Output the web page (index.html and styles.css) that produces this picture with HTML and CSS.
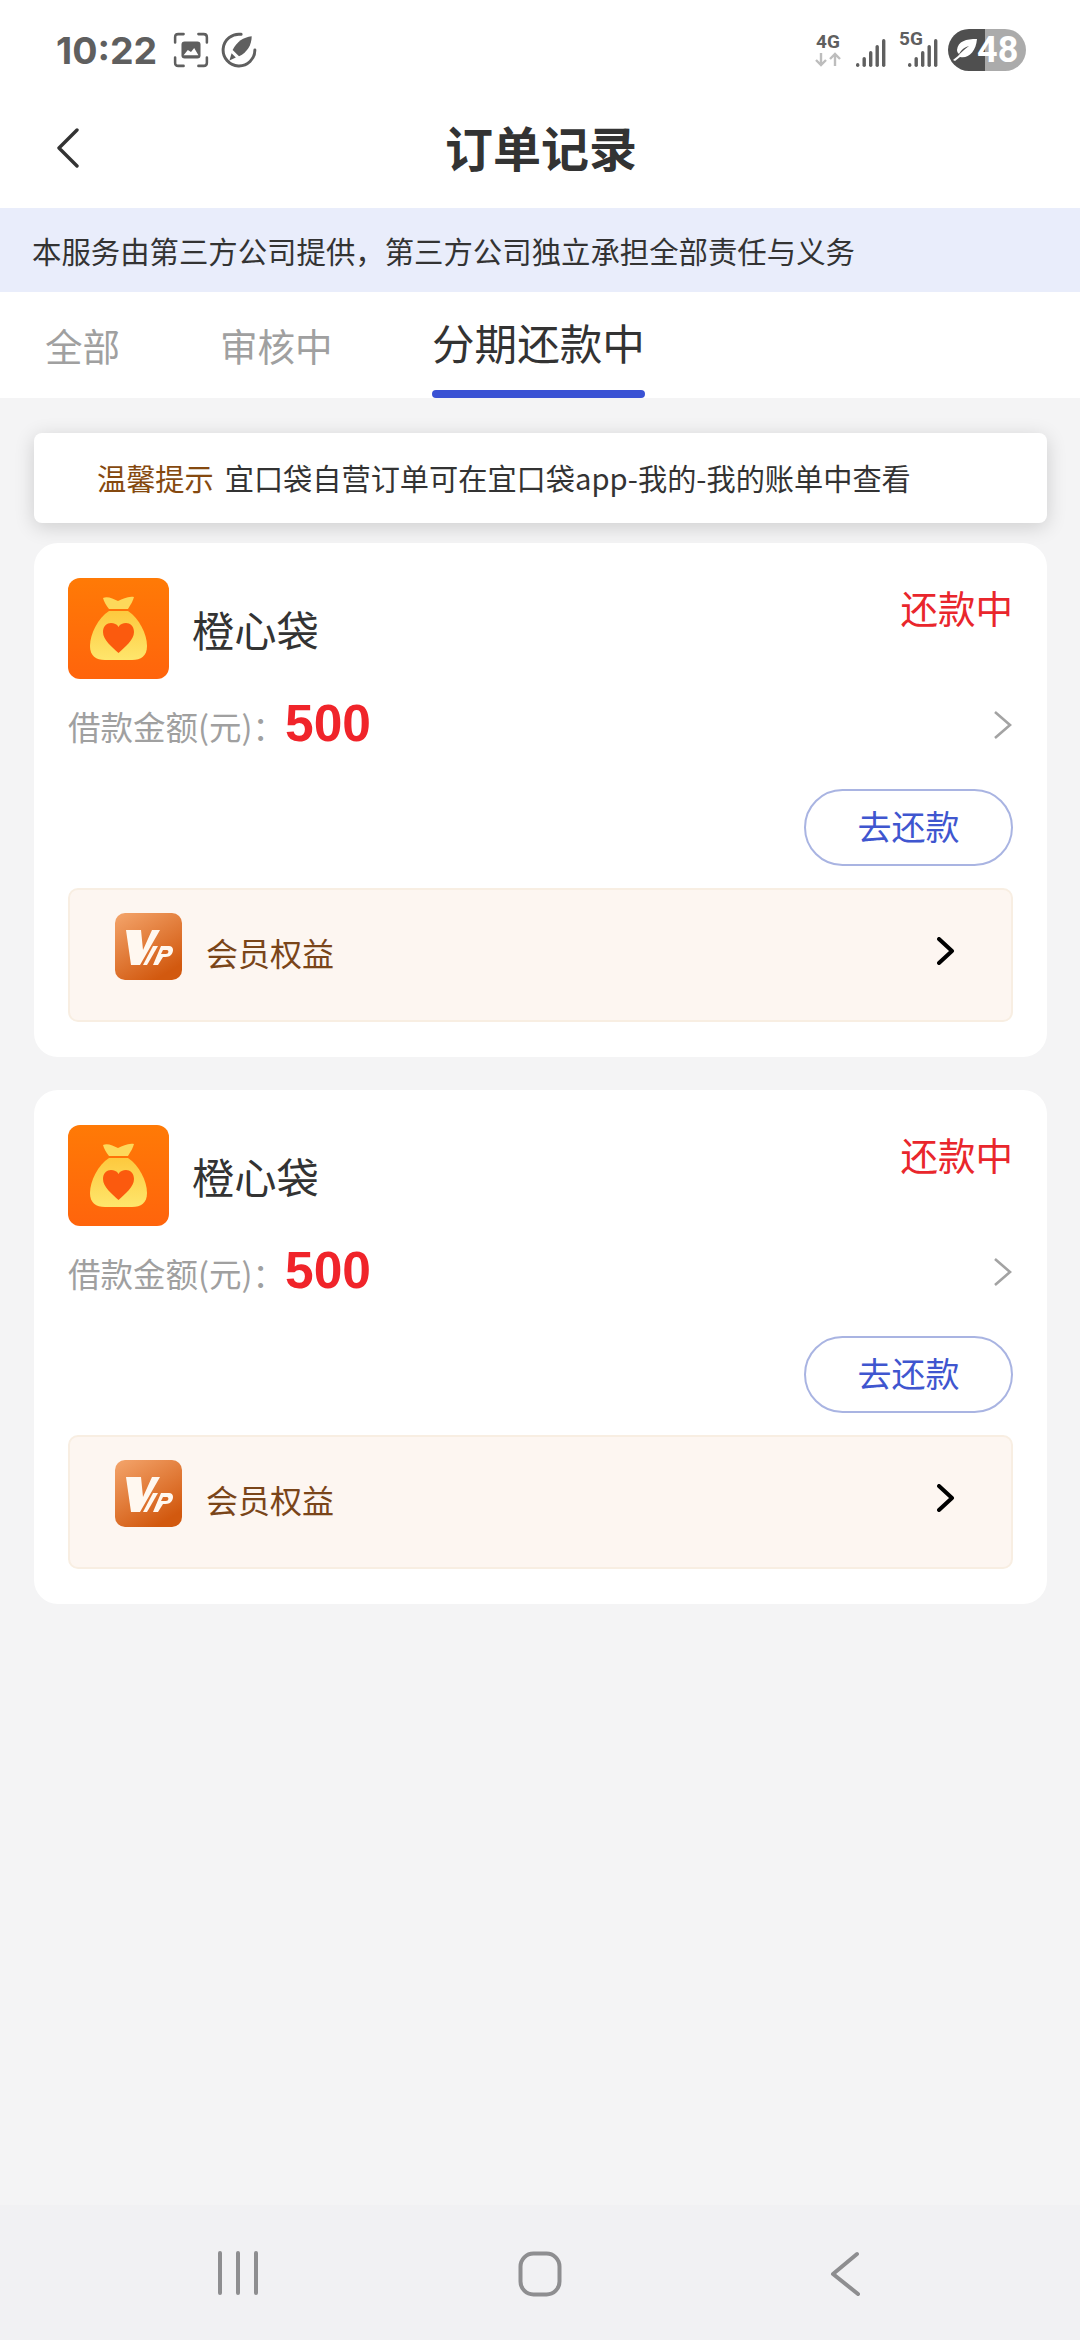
FILE: index.html
```html
<!DOCTYPE html>
<html lang="zh-CN">
<head>
  <meta charset="UTF-8">
  <title>订单记录</title>
  <meta name="viewport" content="width=device-width, initial-scale=1.0">
  <link rel="stylesheet" href="styles.css">
</head>
<body>

  <svg class="defs" width="0" height="0">
    <defs>
      <linearGradient id="bagBg" x1="0" y1="0" x2="0" y2="1">
        <stop offset="0" stop-color="#ff7a06"/>
        <stop offset="1" stop-color="#ff640c"/>
      </linearGradient>
      <linearGradient id="bagFill" x1="0" y1="0" x2="0" y2="1">
        <stop offset="0" stop-color="#fdc93e"/>
        <stop offset="1" stop-color="#fee66c"/>
      </linearGradient>
      <linearGradient id="vipBg" x1="0" y1="0" x2="0.6" y2="1">
        <stop offset="0" stop-color="#f4a56c"/>
        <stop offset="1" stop-color="#d2590f"/>
      </linearGradient>
      <symbol id="bag" viewBox="0 0 101 101">
        <rect width="101" height="101" rx="12" fill="url(#bagBg)"/>
        <path d="M35 20 C40 18 45 21 50 23 C55 21 60 18 66 19 C65 23 63 26 60 31 L41 31 C38 27 36 24 35 20 Z" fill="#fdd85a"/>
        <path d="M41 33 L60 33 C71 40 79 56 79 68 C79 78 73 82 64 82 L37 82 C28 82 22 78 22 68 C22 56 30 40 41 33 Z" fill="url(#bagFill)"/>
        <path d="M50.500 75 C44 69 35 62 35 54 C35 48 39 45 43 45 C46 45 49 46 50.500 49 C52 46 55 45 58 45 C62 45 66 48 66 54 C66 62 57 69 50.500 75 Z" fill="#fb5a0e"/>
      </symbol>
      <symbol id="vip" viewBox="0 0 67 67">
        <rect width="67" height="67" rx="10" fill="url(#vipBg)"/>
        <path d="M11 17 L26 17 L28 37 L37 17 L45 17 L25 52 L16 52 Z" fill="#fff8f0"/>
        <path d="M38 33 L43 33 L32 52 L28 52 Z" fill="#fff8f0"/>
        <path d="M46 33 L54 33 C59 33 59 39 56 42 C54 44 51 44 48 44 L43 52 L38 52 Z M48 37 L46 41 L51 41 C54 41 54 37 52 37 Z" fill="#fff8f0" fill-rule="evenodd"/>
      </symbol>
    </defs>
  </svg>

  <div class="status-bar">
    <div class="status-left">
      <span class="clock">10:22</span>
      <svg class="status-icon" width="36" height="36" viewBox="0 0 34 34">
        <path d="M2 10 V5 Q2 2 5 2 H10 M24 2 H29 Q32 2 32 5 V10 M32 24 V29 Q32 32 29 32 H24 M10 32 H5 Q2 32 2 29 V24" fill="none" stroke="#5f5f5f" stroke-width="2.4" stroke-linecap="round"/>
        <rect x="8" y="9" width="18" height="16" rx="3" fill="#5f5f5f"/>
        <path d="M10 22 L14 17 L17 19 L20 15 L24 22 Z" fill="#fff"/>
      </svg>
      <svg class="status-icon" width="36" height="36" viewBox="0 0 34 34">
        <path d="M19 2.200 A15 15 0 1 0 32 17" fill="none" stroke="#5f5f5f" stroke-width="2.8" stroke-linecap="round"/>
        <path d="M29 4 C21 5 15 9 11 17 L17 23 C25 19 29 12 29 4 Z" fill="#5f5f5f"/>
        <path d="M10 20 L14 24 L8 27 Z" fill="#5f5f5f"/>
      </svg>
    </div>
    <div class="status-right">
      <div class="net">
        <span class="net-label">4G</span>
        <svg width="26" height="15" viewBox="0 0 26 15">
          <path d="M6 1 V13 M1 8 L6 13 L11 8" fill="none" stroke="#bdbdbd" stroke-width="2.4"/>
          <path d="M20 14 V2 M15 7 L20 2 L25 7" fill="none" stroke="#bdbdbd" stroke-width="2.4"/>
        </svg>
      </div>
      <svg class="signal" width="30" height="30" viewBox="0 0 30 30">
        <rect x="0" y="24" width="3.4" height="4" rx="1.7" fill="#5f5f5f"/>
        <rect x="6.500" y="18" width="3.4" height="10" rx="1.7" fill="#5f5f5f"/>
        <rect x="13" y="12" width="3.4" height="16" rx="1.7" fill="#5f5f5f"/>
        <rect x="19.500" y="6" width="3.4" height="22" rx="1.7" fill="#5f5f5f"/>
        <rect x="26" y="0" width="3.4" height="28" rx="1.7" fill="#5f5f5f"/>
      </svg>
      <div class="net-five">
        <span class="net-label">5G</span>
        <svg class="signal" width="30" height="30" viewBox="0 0 30 30">
          <rect x="0" y="24" width="3.4" height="4" rx="1.7" fill="#5f5f5f"/>
          <rect x="6.500" y="18" width="3.4" height="10" rx="1.7" fill="#5f5f5f"/>
          <rect x="13" y="12" width="3.4" height="16" rx="1.7" fill="#5f5f5f"/>
          <rect x="19.500" y="6" width="3.4" height="22" rx="1.7" fill="#5f5f5f"/>
          <rect x="26" y="0" width="3.4" height="28" rx="1.7" fill="#5f5f5f"/>
        </svg>
      </div>
      <div class="battery">
        <svg class="leaf" width="26" height="24" viewBox="0 0 26 24">
          <path d="M25 1 C14 1 6 3 5 12 C5 14 6 15 7 16 C10 11 13 9 17 8 C13 11 9 14 6 18 L1 22 L3 23 L8 19 C16 21 24 14 25 1 Z" fill="#fff"/>
        </svg>
        <span class="battery-level">48</span>
      </div>
    </div>
  </div>

  <div class="top-bar">
    <svg class="back" width="24" height="40" viewBox="0 0 24 40">
      <path d="M21 2 L3 20 L21 38" fill="none" stroke="#333" stroke-width="3.4" stroke-linecap="round" stroke-linejoin="round"/>
    </svg>
    <h1>订单记录</h1>
  </div>

  <div class="notice">本服务由第三方公司提供，第三方公司独立承担全部责任与义务</div>

  <div class="tabs">
    <div class="tab tab-all">全部</div>
    <div class="tab tab-review">审核中</div>
    <div class="tab tab-active">分期还款中</div>
  </div>

  <div class="content">
    <div class="tip">
      <span class="tip-title">温馨提示</span>
      <span class="tip-text">宜口袋自营订单可在宜口袋app-我的-我的账单中查看</span>
    </div>

    <div class="order-card">
      <div class="order-head">
        <svg class="app-logo" width="101" height="101"><use href="#bag"/></svg>
        <span class="app-name">橙心袋</span>
        <span class="order-status">还款中</span>
      </div>
      <div class="amount-row">
        <span class="amount-label">借款金额(元)：</span>
        <span class="amount">500</span>
        <svg class="more" width="20" height="30" viewBox="0 0 20 30">
          <path d="M2 2 L17 15 L2 28" fill="none" stroke="#a3a3a3" stroke-width="2.6"/>
        </svg>
      </div>
      <div class="action-row">
        <div class="repay-btn">去还款</div>
      </div>
      <div class="vip-row">
        <svg class="vip-logo" width="67" height="67"><use href="#vip"/></svg>
        <span class="vip-text">会员权益</span>
        <svg class="vip-more" width="18" height="28" viewBox="0 0 18 28">
          <path d="M2 2 L15 14 L2 26" fill="none" stroke="#000" stroke-width="4" stroke-linecap="round" stroke-linejoin="round"/>
        </svg>
      </div>
    </div>

    <div class="order-card">
      <div class="order-head">
        <svg class="app-logo" width="101" height="101"><use href="#bag"/></svg>
        <span class="app-name">橙心袋</span>
        <span class="order-status">还款中</span>
      </div>
      <div class="amount-row">
        <span class="amount-label">借款金额(元)：</span>
        <span class="amount">500</span>
        <svg class="more" width="20" height="30" viewBox="0 0 20 30">
          <path d="M2 2 L17 15 L2 28" fill="none" stroke="#a3a3a3" stroke-width="2.6"/>
        </svg>
      </div>
      <div class="action-row">
        <div class="repay-btn">去还款</div>
      </div>
      <div class="vip-row">
        <svg class="vip-logo" width="67" height="67"><use href="#vip"/></svg>
        <span class="vip-text">会员权益</span>
        <svg class="vip-more" width="18" height="28" viewBox="0 0 18 28">
          <path d="M2 2 L15 14 L2 26" fill="none" stroke="#000" stroke-width="4" stroke-linecap="round" stroke-linejoin="round"/>
        </svg>
      </div>
    </div>
  </div>

  <div class="nav-bar">
    <svg width="44" height="44" viewBox="0 0 44 44">
      <path d="M4 2 V42 M22 2 V42 M40 2 V42" stroke="#8e8e90" stroke-width="4" stroke-linecap="round"/>
    </svg>
    <svg width="44" height="46" viewBox="0 0 44 46">
      <rect x="2.500" y="2.500" width="39" height="41" rx="13" fill="none" stroke="#8e8e90" stroke-width="4"/>
    </svg>
    <svg class="nav-back" width="32" height="46" viewBox="0 0 32 46">
      <path d="M28 3 L4 23 L29 43" fill="none" stroke="#8e8e90" stroke-width="4" stroke-linecap="round" stroke-linejoin="round"/>
    </svg>
  </div>

</body>
</html>
```

FILE: styles.css
```css
* {
  box-sizing: border-box;
  font-family: "Noto Sans CJK SC", "Noto Sans", sans-serif;
}

html, body {
  margin: 0;
  padding: 0;
}

body {
  width: 1080px;
  height: 2340px;
  display: flex;
  flex-direction: column;
  background-color: #f4f4f5;
  overflow: hidden;
}

.defs {
  display: block;
  height: 0;
}

.status-bar {
  height: 100px;
  flex: none;
  padding: 24px 54px 0 56px;
  display: flex;
  justify-content: space-between;
  align-items: flex-start;
  background-color: #fff;
}

.status-left {
  display: flex;
  align-items: center;
  gap: 12px;
  height: 52px;
}

.clock {
  font-family: Inter, Roboto, sans-serif;
  font-weight: 700;
  font-size: 37.5px;
  color: #5f5f5f;
  margin-right: 4px;
}

.status-right {
  display: flex;
  align-items: center;
  gap: 12px;
  height: 52px;
}

.net {
  display: flex;
  flex-direction: column;
  align-items: center;
  width: 26px;
  margin-right: 3px;
}

.net-label {
  font-family: Roboto, sans-serif;
  font-weight: 700;
  font-size: 19px;
  line-height: 18px;
  color: #5f5f5f;
}

.net svg {
  margin-top: 1px;
}

.signal {
  display: block;
  margin-top: 8px;
}

.net-five {
  position: relative;
  width: 30px;
  height: 38px;
  margin-left: 10px;
}

.net-five .net-label {
  position: absolute;
  left: -9px;
  top: -1px;
}

.battery {
  position: relative;
  width: 78px;
  height: 42px;
  border-radius: 21px;
  margin-left: -2px;
  background: linear-gradient(90deg, #4f4f4f 0, #4f4f4f 47%, #ababab 47%);
  display: flex;
  align-items: center;
}

.leaf {
  margin-left: 4px;
  flex: none;
}

.battery-level {
  font-family: Roboto, sans-serif;
  font-weight: 700;
  font-size: 36px;
  line-height: 42px;
  color: #fff;
  margin-left: -1px;
}

.top-bar {
  height: 108px;
  flex: none;
  display: flex;
  align-items: center;
  justify-content: center;
  position: relative;
  background-color: #fff;
}

.back {
  position: absolute;
  left: 56px;
  top: 28px;
}

.top-bar h1 {
  margin: 0 0 0 2px;
  font-size: 48px;
  font-weight: 700;
  color: #333;
  line-height: 64px;
  position: relative;
  top: -8px;
}

.notice {
  height: 84px;
  flex: none;
  padding-left: 32px;
  background-color: #e9edfb;
  color: #333;
  font-size: 29.4px;
  line-height: 84px;
  white-space: nowrap;
}

.tabs {
  height: 106px;
  flex: none;
  display: flex;
  background-color: #fff;
}

.tab {
  color: #a0a0a0;
  font-size: 37.5px;
  line-height: 105px;
  white-space: nowrap;
}

.tab-all {
  margin-left: 45px;
  width: 175px;
}

.tab-review {
  width: 212px;
}

.tab-active {
  width: 213px;
  color: #333;
  font-size: 42.6px;
  line-height: 99px;
  position: relative;
}

.tab-active:after {
  content: "";
  position: absolute;
  left: 0;
  right: 0;
  bottom: 0;
  height: 8px;
  border-radius: 4px;
  background-color: #3a52d4;
}

.content {
  flex: 1;
  padding: 35px 33px 0 34px;
  display: flex;
  flex-direction: column;
}

.tip {
  height: 90px;
  margin-bottom: 20px;
  padding: 0 0 2px 63px;
  display: flex;
  align-items: center;
  gap: 11px;
  background-color: #fff;
  border-radius: 8px;
  box-shadow: 0 4px 20px rgba(0, 0, 0, 0.16);
  font-size: 29.2px;
  white-space: nowrap;
}

.tip-title {
  color: #85490f;
}

.tip-text {
  color: #333;
}

.order-card {
  height: 514px;
  margin-bottom: 33px;
  padding: 35px 34px 0;
  background-color: #fff;
  border-radius: 24px;
}

.order-head {
  height: 101px;
  display: flex;
  align-items: flex-start;
}

.app-logo {
  flex: none;
}

.app-name {
  margin-left: 23px;
  margin-top: 21px;
  font-size: 42.3px;
  line-height: 60px;
  color: #333;
}

.order-status {
  margin-left: auto;
  margin-top: 1px;
  font-size: 37.5px;
  line-height: 56px;
  color: #e9262c;
}

.amount-row {
  height: 60px;
  margin-top: 16px;
  display: flex;
  align-items: center;
}

.amount-label {
  font-size: 32.5px;
  color: #a0a0a0;
  width: 217px;
  white-space: nowrap;
}

.amount {
  font-family: "Liberation Sans", Arial, sans-serif;
  font-weight: 700;
  font-size: 51.5px;
  color: #f0242a;
  position: relative;
  top: -2px;
}

.more {
  margin-left: auto;
}

.action-row {
  margin-top: 34px;
  display: flex;
  justify-content: flex-end;
}

.repay-btn {
  width: 209px;
  height: 77px;
  border: 2px solid #a9b4e2;
  border-radius: 39px;
  text-align: center;
  color: #3f56cf;
  font-size: 34px;
  line-height: 70px;
}

.vip-row {
  height: 134px;
  margin-top: 22px;
  padding-left: 45px;
  padding-right: 56px;
  display: flex;
  align-items: flex-start;
  background-color: #fdf6f1;
  border: 2px solid #f8eee2;
  border-radius: 10px;
}

.vip-logo {
  margin-top: 23px;
  flex: none;
}

.vip-text {
  margin-left: 24px;
  margin-top: 39px;
  font-size: 32px;
  line-height: 46px;
  color: #7a4519;
}

.vip-more {
  margin-left: auto;
  margin-top: 47px;
}

.nav-bar {
  height: 135px;
  flex: none;
  padding: 46px 0 0 216px;
  display: flex;
  align-items: flex-start;
  gap: 258px;
  background-color: #f1f1f3;
}

.nav-back {
  margin-left: 9px;
}
```
